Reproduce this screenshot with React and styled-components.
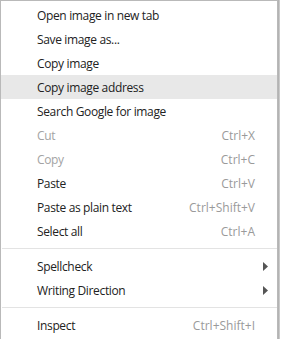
import styled, { createGlobalStyle } from 'styled-components';

const Global = createGlobalStyle`
  html, body {
    margin: 0;
    padding: 0;
    background: #ffffff;
  }
`;

const items = [
  { label: 'Open image in new tab' },
  { label: 'Save image as...' },
  { label: 'Copy image' },
  { label: 'Copy image address', active: true },
  { label: 'Search Google for image' },
  { label: 'Cut', shortcut: 'Ctrl+X', disabled: true },
  { label: 'Copy', shortcut: 'Ctrl+C', disabled: true },
  { label: 'Paste', shortcut: 'Ctrl+V' },
  { label: 'Paste as plain text', shortcut: 'Ctrl+Shift+V' },
  { label: 'Select all', shortcut: 'Ctrl+A' },
  { separator: true },
  { label: 'Spellcheck', submenu: true },
  { label: 'Writing Direction', submenu: true },
  { separator: true },
  { label: 'Inspect', shortcut: 'Ctrl+Shift+I' },
];

export default function App() {
  return (
    <>
      <Global />
      <Page>
        <Menu>
          {items.map((item, i) =>
            item.separator ? (
              <Separator key={i} />
            ) : (
              <Item key={i} $active={item.active} $disabled={item.disabled}>
                <Label>{item.label}</Label>
                {item.shortcut && <Shortcut>{item.shortcut}</Shortcut>}
                {item.submenu && (
                  <Arrow viewBox="0 0 5 9">
                    <path d="M0 0 L5 4.5 L0 9 Z" fill="#555" />
                  </Arrow>
                )}
              </Item>
            )
          )}
        </Menu>
        <Shadow />
      </Page>
    </>
  );
}

const Page = styled.div`
  display: flex;
  width: 281px;
  height: 339px;
  overflow: hidden;
`;

const Menu = styled.div`
  width: 276px;
  flex-shrink: 0;
  border: 1px solid #b9b9b9;
  border-bottom: none;
  background: #ffffff;
  padding-top: 2px;
  font-family: "Open Sans", "Noto Sans", sans-serif;
  font-size: 12px;
  color: #222222;
`;

const Shadow = styled.div`
  width: 2px;
  background: linear-gradient(to right, #a8a8a8, #d6d6d6);
`;

const Item = styled.div`
  display: flex;
  align-items: center;
  height: 24px;
  padding: 0 22px 0 36px;
  background: ${(p) => (p.$active ? '#e8e8e8' : 'transparent')};
  color: ${(p) => (p.$disabled ? '#a3a3a3' : '#222222')};
`;

const Label = styled.span`
  flex: 1;
  white-space: nowrap;
  letter-spacing: -0.35px;
`;

const Shortcut = styled.span`
  color: #9a9a9a;
  white-space: nowrap;
`;

const Arrow = styled.svg`
  width: 5px;
  height: 9px;
  margin-right: -13px;
`;

const Separator = styled.div`
  height: 1px;
  margin: 5px 0 5px 1px;
  background: #e3e3e3;
`;
